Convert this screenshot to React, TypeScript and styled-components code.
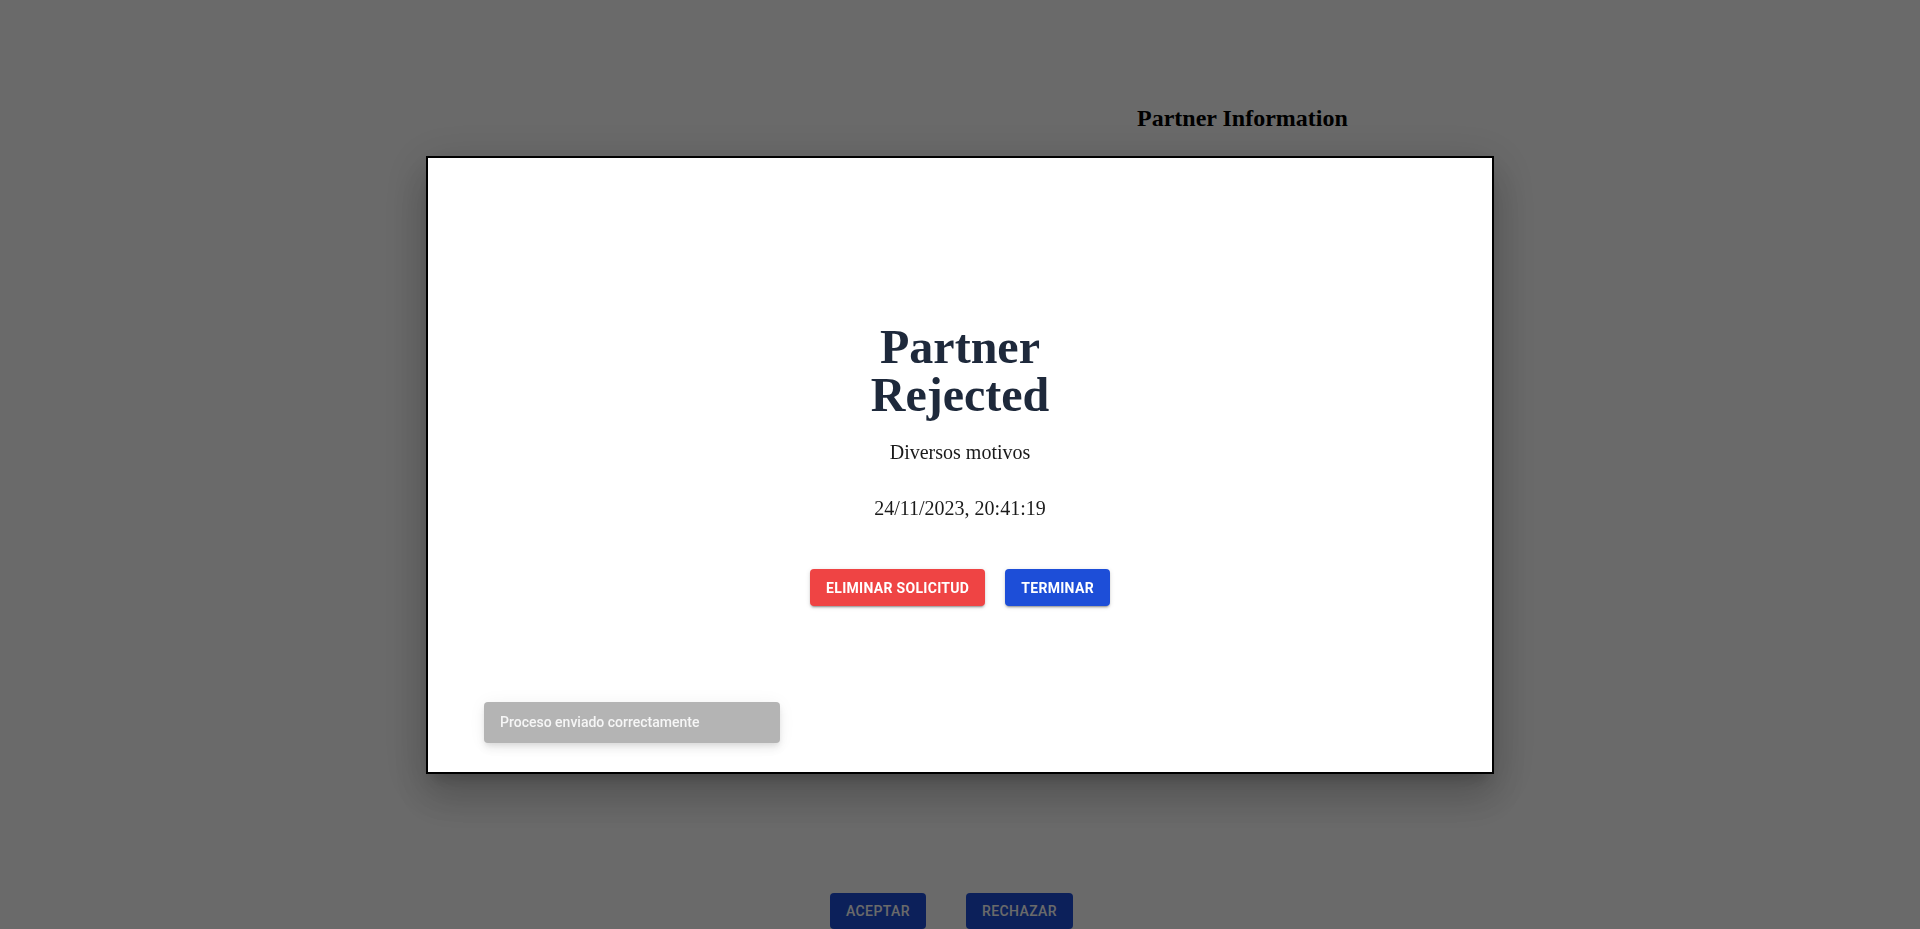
import React from "react";
import styled, { createGlobalStyle } from "styled-components";

const GlobalStyle = createGlobalStyle`
  html, body {
    margin: 0;
    padding: 0;
    background: #ffffff;
    font-family: "Liberation Serif", "Times New Roman", serif;
  }
`;

const Page = styled.div`
  width: 1920px;
  height: 929px;
  overflow: hidden;
  display: flex;
  flex-direction: column;
`;

const PageHeading = styled.h2`
  margin: 105px 0 0 1137px;
  font-family: "Liberation Serif", serif;
  font-size: 24px;
  font-weight: 700;
  color: #000;
`;

const PageActions = styled.div`
  margin-top: 761px;
  margin-left: 830px;
  display: flex;
  gap: 40px;
`;

const PageButton = styled.button`
  height: 36px;
  padding: 0 16px;
  border: none;
  border-radius: 4px;
  background: #1d4ed8;
  color: #ffffff;
  font-family: Roboto, "Liberation Sans", sans-serif;
  font-size: 14px;
  font-weight: 500;
  letter-spacing: 0.4px;
  text-transform: uppercase;
`;

const Backdrop = styled.div`
  position: fixed;
  inset: 0;
  background: rgba(0, 0, 0, 0.585);
  display: flex;
  align-items: center;
  justify-content: center;
`;

const Modal = styled.div`
  position: relative;
  box-sizing: border-box;
  width: 1068px;
  height: 618px;
  background: #ffffff;
  border: 2px solid #000;
  box-shadow: 0px 11px 15px -7px rgba(0, 0, 0, 0.2),
    0px 24px 38px 3px rgba(0, 0, 0, 0.14),
    0px 9px 46px 8px rgba(0, 0, 0, 0.12);
  display: flex;
  flex-direction: column;
  align-items: center;
  justify-content: center;
  text-align: center;
`;

const Title = styled.h1`
  margin: 0;
  width: 200px;
  font-family: "Liberation Serif", serif;
  font-size: 48px;
  line-height: 48px;
  font-weight: 700;
  color: #1e293b;
`;

const InfoText = styled.p<{ $gap: number }>`
  margin: ${(p) => p.$gap}px 0 0;
  font-family: "Liberation Serif", serif;
  font-size: 20px;
  line-height: 28px;
  color: #1a1a1a;
`;

const Actions = styled.div`
  margin-top: 47px;
  display: flex;
  gap: 20px;
`;

const ActionButton = styled.button<{ $tone: "danger" | "primary" }>`
  height: 37px;
  padding: 0 16px;
  border: none;
  border-radius: 4px;
  background: ${(p) => (p.$tone === "danger" ? "#ef4444" : "#1d4ed8")};
  color: #ffffff;
  font-family: Roboto, "Liberation Sans", sans-serif;
  font-size: 14px;
  font-weight: 700;
  letter-spacing: 0.3px;
  text-transform: uppercase;
  cursor: pointer;
  box-shadow: 0px 3px 1px -2px rgba(0, 0, 0, 0.2),
    0px 2px 2px 0px rgba(0, 0, 0, 0.14),
    0px 1px 5px 0px rgba(0, 0, 0, 0.12);
`;

const Toast = styled.div`
  position: absolute;
  left: 56px;
  top: 544px;
  box-sizing: border-box;
  width: 296px;
  height: 41px;
  padding: 0 16px;
  display: flex;
  align-items: center;
  border-radius: 4px;
  background: #b4b4b4;
  color: #f6f6f6;
  font-family: Roboto, "Liberation Sans", sans-serif;
  font-size: 14px;
  font-weight: 500;
  text-align: left;
  box-shadow: 0px 3px 5px -1px rgba(0, 0, 0, 0.08),
    0px 6px 10px 0px rgba(0, 0, 0, 0.06),
    0px 1px 18px 0px rgba(0, 0, 0, 0.05);
`;

export default function App() {
  return (
    <>
      <GlobalStyle />
      <Page>
        <PageHeading>Partner Information</PageHeading>
        <PageActions>
          <PageButton>Aceptar</PageButton>
          <PageButton>Rechazar</PageButton>
        </PageActions>
      </Page>
      <Backdrop>
        <Modal>
          <Title>Partner Rejected</Title>
          <InfoText $gap={19}>Diversos motivos</InfoText>
          <InfoText $gap={28}>24/11/2023, 20:41:19</InfoText>
          <Actions>
            <ActionButton $tone="danger">Eliminar solicitud</ActionButton>
            <ActionButton $tone="primary">Terminar</ActionButton>
          </Actions>
          <Toast>Proceso enviado correctamente</Toast>
        </Modal>
      </Backdrop>
    </>
  );
}
